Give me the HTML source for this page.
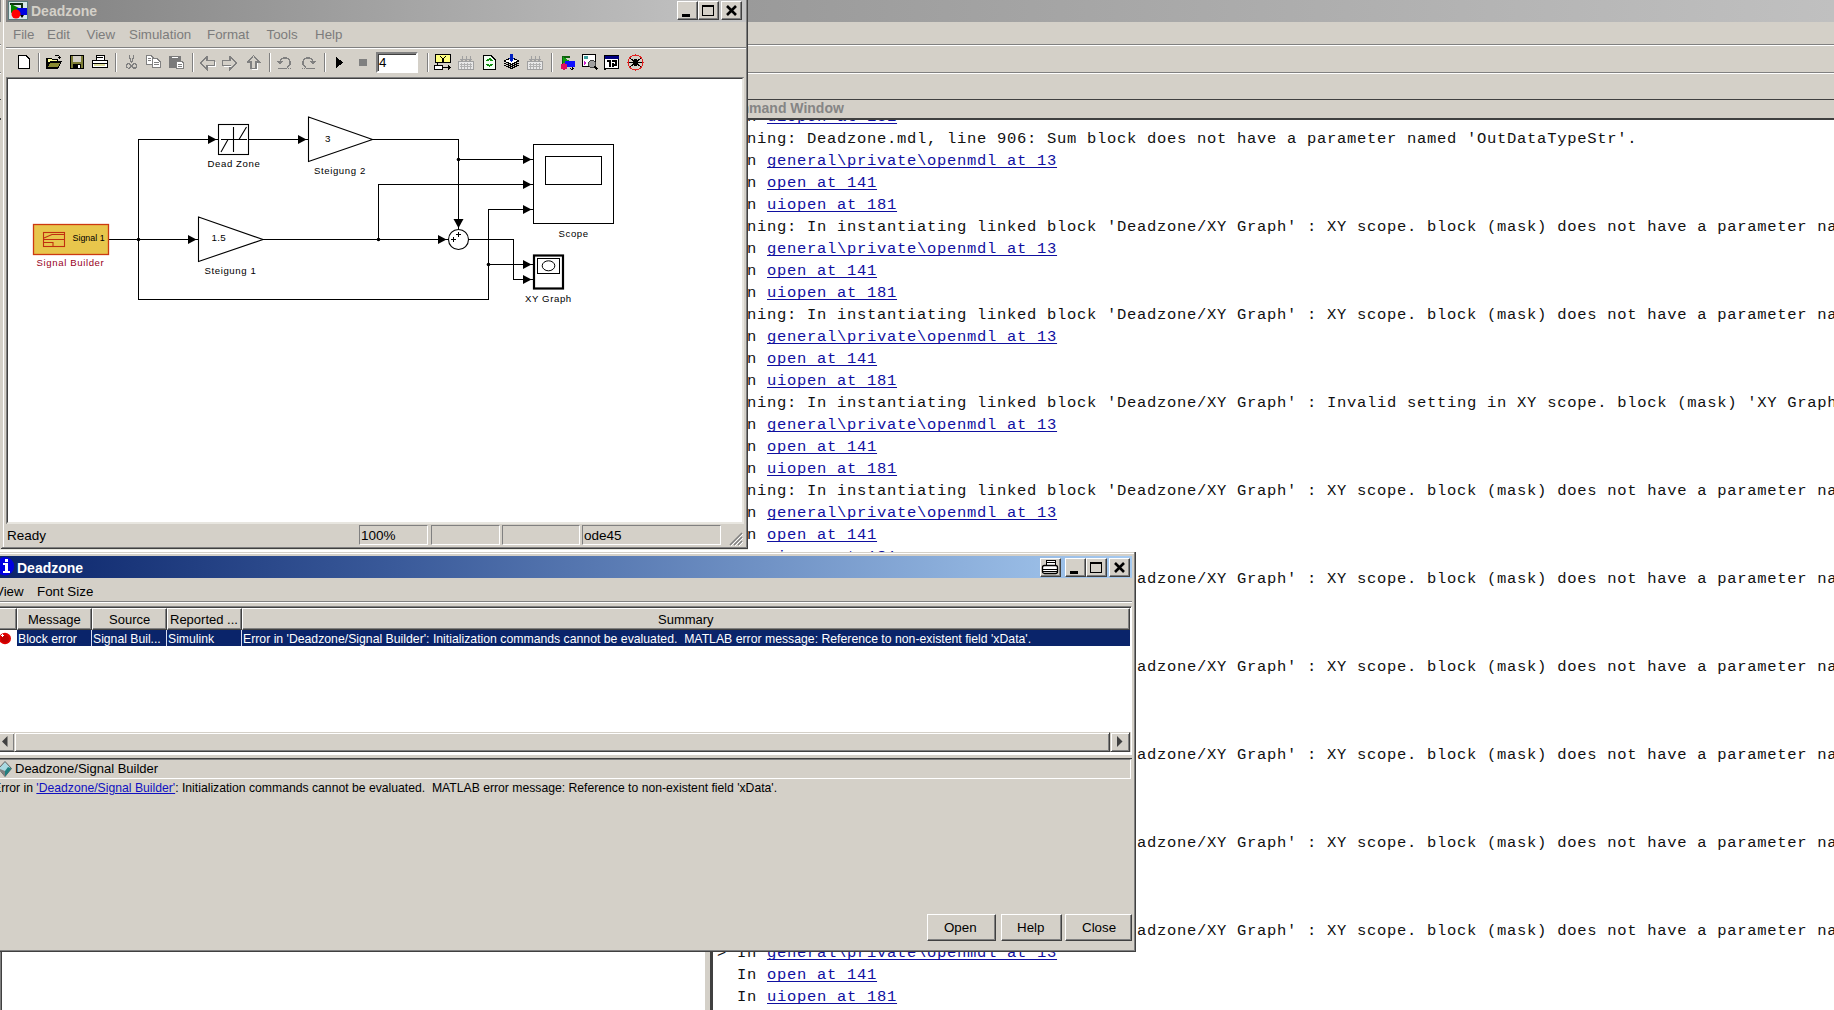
<!DOCTYPE html><html><head><meta charset="utf-8"><style>
*{margin:0;padding:0;box-sizing:border-box}
html,body{width:1834px;height:1010px;overflow:hidden;background:#d4d0c8;position:relative}
body{font-family:"Liberation Sans",sans-serif;font-size:13px;color:#000}
.a{position:absolute}
.mono{font-family:"Liberation Mono",monospace;font-size:15.5px;line-height:22px;white-space:pre;letter-spacing:0.7px;color:#111}
.lk{color:#1010a0;text-decoration:underline;text-underline-offset:2px;text-decoration-skip-ink:none}
.face{background:#d4d0c8}
.t{position:absolute;white-space:pre;line-height:1}
</style></head><body><div class="a" style="left:0;top:0;width:1834px;height:22px;background:linear-gradient(90deg,#808080,#c0c0c0)"></div><div class="a face" style="left:0;top:22px;width:1834px;height:22px"></div><div class="a" style="left:0;top:44px;width:1834px;height:1px;background:#808080"></div><div class="a" style="left:0;top:45px;width:1834px;height:1px;background:#fff"></div><div class="a" style="left:0;top:72px;width:1834px;height:1px;background:#808080"></div><div class="a" style="left:0;top:73px;width:1834px;height:1px;background:#fff"></div><div class="a" style="left:0;top:99px;width:1834px;height:1px;background:#404040"></div><div class="a" style="left:0;top:118px;width:1834px;height:2px;background:#404040"></div><div class="a" style="left:713px;top:120px;width:1121px;height:890px;background:#fff"></div><div class="t" style="left:718px;top:101px;font-size:14px;font-weight:bold;color:#858585">Command Window</div><div class="a" style="left:704px;top:120px;width:6px;height:890px;background:#d4d0c8;border-left:1px solid #fff"></div><div class="a" style="left:710px;top:120px;width:3px;height:890px;background:#404040"></div><div class="a" style="left:0;top:940px;width:704px;height:70px;background:#fff;border-left:2px solid #404040;border-top:2px solid #404040"></div><div class="a" style="left:0;top:940px;width:1px;height:70px;background:#808080"></div><div class="a" style="left:713px;top:120px;width:1121px;height:890px;overflow:hidden"><div class="a mono" style="left:4px;top:-14px">  In <span class="lk">uiopen at 181</span>
Warning: Deadzone.mdl, line 906: Sum block does not have a parameter named &#x27;OutDataTypeStr&#x27;.
&gt; In <span class="lk">general\private\openmdl at 13</span>
  In <span class="lk">open at 141</span>
  In <span class="lk">uiopen at 181</span>
Warning: In instantiating linked block &#x27;Deadzone/XY Graph&#x27; : XY scope. block (mask) does not have a parameter named &#x27;Line&#x27;.
&gt; In <span class="lk">general\private\openmdl at 13</span>
  In <span class="lk">open at 141</span>
  In <span class="lk">uiopen at 181</span>
Warning: In instantiating linked block &#x27;Deadzone/XY Graph&#x27; : XY scope. block (mask) does not have a parameter named &#x27;Line&#x27;.
&gt; In <span class="lk">general\private\openmdl at 13</span>
  In <span class="lk">open at 141</span>
  In <span class="lk">uiopen at 181</span>
Warning: In instantiating linked block &#x27;Deadzone/XY Graph&#x27; : Invalid setting in XY scope. block (mask) &#x27;XY Graph&#x27;
&gt; In <span class="lk">general\private\openmdl at 13</span>
  In <span class="lk">open at 141</span>
  In <span class="lk">uiopen at 181</span>
Warning: In instantiating linked block &#x27;Deadzone/XY Graph&#x27; : XY scope. block (mask) does not have a parameter named &#x27;Line&#x27;.
&gt; In <span class="lk">general\private\openmdl at 13</span>
  In <span class="lk">open at 141</span>
  In <span class="lk">uiopen at 181</span>
Warning: In instantiating linked block &#x27;Deadzone/XY Graph&#x27; : XY scope. block (mask) does not have a parameter named &#x27;Line&#x27;.
&gt; In <span class="lk">general\private\openmdl at 13</span>
  In <span class="lk">open at 141</span>
  In <span class="lk">uiopen at 181</span>
Warning: In instantiating linked block &#x27;Deadzone/XY Graph&#x27; : XY scope. block (mask) does not have a parameter named &#x27;Line&#x27;.
&gt; In <span class="lk">general\private\openmdl at 13</span>
  In <span class="lk">open at 141</span>
  In <span class="lk">uiopen at 181</span>
Warning: In instantiating linked block &#x27;Deadzone/XY Graph&#x27; : XY scope. block (mask) does not have a parameter named &#x27;Line&#x27;.
&gt; In <span class="lk">general\private\openmdl at 13</span>
  In <span class="lk">open at 141</span>
  In <span class="lk">uiopen at 181</span>
Warning: In instantiating linked block &#x27;Deadzone/XY Graph&#x27; : XY scope. block (mask) does not have a parameter named &#x27;Line&#x27;.
&gt; In <span class="lk">general\private\openmdl at 13</span>
  In <span class="lk">open at 141</span>
  In <span class="lk">uiopen at 181</span>
Warning: In instantiating linked block &#x27;Deadzone/XY Graph&#x27; : XY scope. block (mask) does not have a parameter named &#x27;Line&#x27;.
&gt; In <span class="lk">general\private\openmdl at 13</span>
  In <span class="lk">open at 141</span>
  In <span class="lk">uiopen at 181</span></div></div><div class="a face" style="left:1px;top:0;width:747px;height:549px"></div><div class="a" style="left:3px;top:0;width:1px;height:548px;background:#fff"></div><div class="a" style="left:746px;top:0;width:1px;height:548px;background:#808080"></div><div class="a" style="left:747px;top:0;width:1px;height:549px;background:#404040"></div><div class="a" style="left:2px;top:547px;width:745px;height:1px;background:#808080"></div><div class="a" style="left:1px;top:548px;width:747px;height:1px;background:#404040"></div><div class="a" style="left:6px;top:0;width:740px;height:22px;background:linear-gradient(90deg,#808080,#c4c4c4)"></div><svg class="a" style="left:8px;top:1px" width="20" height="19" viewBox="0 0 20 19">
<rect x="0.5" y="0.5" width="19" height="18" fill="#d8e8e8" stroke="#5a7a7a"/>
<rect x="2" y="2" width="13" height="2" fill="#103010"/>
<rect x="13" y="2" width="2" height="13" fill="#103010"/>
<polygon points="3,3 13,8 3,12" fill="#008000"/>
<rect x="9" y="7" width="10" height="7" fill="#0000e0"/>
<circle cx="8" cy="13" r="4.5" fill="#ff0000"/>
<polygon points="12,14 16,14 14,17" fill="#000"/>
</svg><div class="t" style="left:31px;top:4px;font-size:14px;font-weight:bold;color:#d4d0c8">Deadzone</div><div class="a face" style="left:677px;top:1px;width:21px;height:19px;border:1px solid;border-color:#fff #404040 #404040 #fff;box-shadow:inset -1px -1px #808080"></div><svg class="a" style="left:677px;top:1px" width="21" height="19"><rect x="5" y="13" width="8" height="3" fill="#000"/></svg><div class="a face" style="left:698px;top:1px;width:21px;height:19px;border:1px solid;border-color:#fff #404040 #404040 #fff;box-shadow:inset -1px -1px #808080"></div><svg class="a" style="left:698px;top:1px" width="21" height="19"><rect x="4.5" y="4.5" width="11" height="10" fill="none" stroke="#000"/><rect x="4" y="4" width="12" height="2" fill="#000"/></svg><div class="a face" style="left:721px;top:1px;width:21px;height:19px;border:1px solid;border-color:#fff #404040 #404040 #fff;box-shadow:inset -1px -1px #808080"></div><svg class="a" style="left:721px;top:1px" width="21" height="19"><path d="M6 5 L15 14 M15 5 L6 14" stroke="#000" stroke-width="2.6"/></svg><div class="t" style="left:13px;top:28px;font-size:13.33px;color:#7c7c7c">File</div><div class="t" style="left:47px;top:28px;font-size:13.33px;color:#7c7c7c">Edit</div><div class="t" style="left:86.5px;top:28px;font-size:13.33px;color:#7c7c7c">View</div><div class="t" style="left:129px;top:28px;font-size:13.33px;color:#7c7c7c">Simulation</div><div class="t" style="left:207px;top:28px;font-size:13.33px;color:#7c7c7c">Format</div><div class="t" style="left:266.5px;top:28px;font-size:13.33px;color:#7c7c7c">Tools</div><div class="t" style="left:315px;top:28px;font-size:13.33px;color:#7c7c7c">Help</div><div class="a" style="left:6px;top:47px;width:740px;height:1px;background:#808080"></div><div class="a" style="left:6px;top:48px;width:740px;height:1px;background:#fff"></div><div class="a" style="left:6px;top:77px;width:738px;height:447px;background:#fff;border:2px solid;border-color:#404040 #e8e6e0 #e8e6e0 #404040"></div><div class="a" style="left:6px;top:77px;width:737px;height:1px;background:#808080"></div><div class="a" style="left:6px;top:77px;width:1px;height:446px;background:#808080"></div><div class="t" style="left:7px;top:529px;font-size:13.5px">Ready</div><div class="a" style="left:359px;top:525px;width:69px;height:20px;border:1px solid;border-color:#808080 #fff #fff #808080"></div><div class="t" style="left:361px;top:529px;font-size:13.5px">100%</div><div class="a" style="left:431px;top:525px;width:69px;height:20px;border:1px solid;border-color:#808080 #fff #fff #808080"></div><div class="a" style="left:502px;top:525px;width:78px;height:20px;border:1px solid;border-color:#808080 #fff #fff #808080"></div><div class="a" style="left:582px;top:525px;width:139px;height:20px;border:1px solid;border-color:#808080 #fff #fff #808080"></div><div class="t" style="left:584px;top:529px;font-size:13.5px">ode45</div><svg class="a" style="left:728px;top:531px" width="16" height="16"><path d="M14 2 L2 14 M14 6 L6 14 M14 10 L10 14" stroke="#808080" stroke-width="1.5"/><path d="M15 3 L3 15 M15 7 L7 15 M15 11 L11 15" stroke="#fff" stroke-width="1"/></svg><div class="a" style="left:38px;top:53px;width:1px;height:19px;background:#808080"></div><div class="a" style="left:39px;top:53px;width:1px;height:19px;background:#fff"></div><div class="a" style="left:115px;top:53px;width:1px;height:19px;background:#808080"></div><div class="a" style="left:116px;top:53px;width:1px;height:19px;background:#fff"></div><div class="a" style="left:192px;top:53px;width:1px;height:19px;background:#808080"></div><div class="a" style="left:193px;top:53px;width:1px;height:19px;background:#fff"></div><div class="a" style="left:269px;top:53px;width:1px;height:19px;background:#808080"></div><div class="a" style="left:270px;top:53px;width:1px;height:19px;background:#fff"></div><div class="a" style="left:324px;top:53px;width:1px;height:19px;background:#808080"></div><div class="a" style="left:325px;top:53px;width:1px;height:19px;background:#fff"></div><div class="a" style="left:427px;top:53px;width:1px;height:19px;background:#808080"></div><div class="a" style="left:428px;top:53px;width:1px;height:19px;background:#fff"></div><div class="a" style="left:551px;top:53px;width:1px;height:19px;background:#808080"></div><div class="a" style="left:552px;top:53px;width:1px;height:19px;background:#fff"></div><svg class="a" style="left:18px;top:55px" width="12" height="14" viewBox="0 0 12 14" shape-rendering="crispEdges" ><path d="M0.5 0.5 H8 L11.5 4 V13.5 H0.5 Z" fill="#fff" stroke="#000" stroke-width="1.6"/></svg><svg class="a" style="left:46px;top:54px" width="16" height="15" viewBox="0 0 16 15" shape-rendering="crispEdges" ><path d="M1 4 H5 L6 5 H11 V8 H1 Z" fill="#ffff99" stroke="#000"/><path d="M1 14 L4 8 H15 L12 14 Z" fill="#8a8a30" stroke="#000" stroke-width="1.3"/><path d="M1 4 V14" stroke="#000" stroke-width="1.3"/><path d="M9 2 Q11 0 13 2 L14 4" fill="none" stroke="#000"/><path d="M12 3 L15 3 L14 6Z" fill="#000"/></svg><svg class="a" style="left:70px;top:55px" width="14" height="14" viewBox="0 0 14 14" shape-rendering="crispEdges" ><rect x="0.5" y="0.5" width="13" height="13" fill="#7d7d35" stroke="#000" stroke-width="1.3"/><rect x="3" y="1" width="8" height="6" fill="#d4d0c8"/><rect x="3" y="9" width="8" height="4" fill="#000"/><rect x="8" y="10" width="2" height="3" fill="#fff"/></svg><svg class="a" style="left:92px;top:55px" width="16" height="14" viewBox="0 0 16 14" shape-rendering="crispEdges" ><rect x="4.5" y="0.5" width="8" height="5" fill="#fff" stroke="#000"/><path d="M5 2.5 H11" stroke="#000"/><rect x="0.5" y="5.5" width="15" height="7" rx="1.5" fill="#fff" stroke="#000" stroke-width="1.4"/><path d="M1 8.5 H15" stroke="#000" stroke-width="1.3"/><rect x="2" y="9" width="11" height="2" fill="#e0e0a0"/></svg><svg class="a" style="left:126px;top:55px" width="11" height="14" viewBox="0 0 11 14" shape-rendering="crispEdges" ><path d="M3 0 L5.5 8 M8 0 L5.5 8" stroke="#808080" stroke-width="1.2"/><circle cx="2.8" cy="11" r="2.2" fill="none" stroke="#808080" stroke-width="1.2"/><circle cx="8.2" cy="11" r="2.2" fill="none" stroke="#808080" stroke-width="1.2"/></svg><svg class="a" style="left:146px;top:55px" width="15" height="13" viewBox="0 0 15 13" shape-rendering="crispEdges" ><path d="M0.5 0.5 H5 L7 2.5 V9.5 H0.5Z" fill="#fff" stroke="#808080"/><path d="M6.5 3.5 H11 L14.5 7 V12.5 H6.5Z" fill="#fff" stroke="#808080"/><path d="M8 7.5 H13 M8 9.5 H13" stroke="#808080"/><path d="M2 3.5H5 M2 5.5H5" stroke="#808080"/></svg><svg class="a" style="left:169px;top:55px" width="15" height="14" viewBox="0 0 15 14" shape-rendering="crispEdges" ><rect x="0" y="1" width="12" height="12" rx="1.5" fill="#7a7a7a"/><rect x="3" y="2" width="6" height="1" fill="#fff"/><path d="M7.5 6.5 H13 L14.5 8 V13.5 H7.5Z" fill="#fff" stroke="#808080"/><path d="M9 9.5H13 M9 11.5H13" stroke="#808080"/></svg><svg class="a" style="left:200px;top:56px" width="16" height="15" viewBox="0 0 16 15" shape-rendering="crispEdges" ><path d="M7 0.5 L0.5 7 L7 13.5 V9.5 H14.5 V4.5 H7 Z" fill="#d4d0c8" stroke="#808080" stroke-width="1.3"/><path d="M8 10.5 H15.5 V5.5" fill="none" stroke="#fff"/></svg><svg class="a" style="left:222px;top:56px" width="16" height="15" viewBox="0 0 16 15" shape-rendering="crispEdges" ><path d="M8 0.5 L14.5 7 L8 13.5 V9.5 H0.5 V4.5 H8 Z" fill="#d4d0c8" stroke="#808080" stroke-width="1.3"/><path d="M1.5 10.5 H8.5" fill="none" stroke="#fff"/></svg><svg class="a" style="left:247px;top:55px" width="14" height="15" viewBox="0 0 14 15" shape-rendering="crispEdges" ><path d="M0.5 7 L6.5 0.5 L12.5 7 H9 V13.5 H4 V7 Z" fill="#d4d0c8" stroke="#808080" stroke-width="1.3"/><path d="M5 14.5 H10 V8" fill="none" stroke="#fff"/></svg><svg class="a" style="left:277px;top:56px" width="16" height="14" viewBox="0 0 16 14" shape-rendering="crispEdges" ><path d="M3 7 Q3 2 8 2 Q13 2 13 7 Q13 10 10 11" fill="none" stroke="#808080" stroke-width="1.5"/><path d="M0 5 L3 9 L6 5Z" fill="#808080"/><path d="M1 12.5 H10 M11 12.5 H12 M13 12.5H14" stroke="#808080" stroke-width="1.5"/></svg><svg class="a" style="left:300px;top:56px" width="16" height="14" viewBox="0 0 16 14" shape-rendering="crispEdges" ><g transform="translate(16,0) scale(-1,1)"><path d="M3 7 Q3 2 8 2 Q13 2 13 7 Q13 10 10 11" fill="none" stroke="#808080" stroke-width="1.5"/><path d="M0 5 L3 9 L6 5Z" fill="#808080"/><path d="M1 12.5 H10 M11 12.5 H12 M13 12.5H14" stroke="#808080" stroke-width="1.5"/></g></svg><svg class="a" style="left:336px;top:57px" width="8" height="11" viewBox="0 0 8 11" shape-rendering="crispEdges" ><path d="M0 0 L7.5 5.5 L0 11Z" fill="#000"/></svg><svg class="a" style="left:359px;top:59px" width="8" height="8" viewBox="0 0 8 8" shape-rendering="crispEdges" ><rect x="0" y="0" width="8" height="7" fill="#808080"/></svg><div class="a" style="left:376px;top:52px;width:42px;height:21px;background:#fff;border:2px solid;border-color:#808080 #fff #fff #808080;box-shadow:inset 1px 1px #404040"></div><div class="t" style="left:379px;top:56px;font-size:13.33px">4</div><svg class="a" style="left:434px;top:54px" width="18" height="17" viewBox="0 0 18 17" shape-rendering="crispEdges" ><rect x="1.5" y="0.5" width="15" height="8" fill="#ffff80" stroke="#000"/><path d="M6 2 L9 5 L12 2 M9 5 V8" stroke="#000" stroke-width="1.4" fill="none"/><rect x="0.5" y="11.5" width="8" height="4" fill="#fff" stroke="#000" stroke-width="1.2"/><path d="M9 13.5 H16" stroke="#000" stroke-width="1.3"/><path d="M14 11 L17.5 13.5 L14 16Z" fill="#000"/><path d="M3 9 V11" stroke="#000"/></svg><svg class="a" style="left:458px;top:55px" width="16" height="15" viewBox="0 0 16 15" shape-rendering="crispEdges" ><rect x="0.5" y="6.5" width="15" height="8" fill="#e8e8e8" stroke="#a0a0a0"/><path d="M2 9.5H14 M2 11.5H14 M3 8 V14 M6 8V14 M9 8V14 M12 8V14" stroke="#b0b0b0"/><path d="M4 1V6 M8 1V6 M12 1V6" stroke="#a0a0a0"/><path d="M2.5 4 L4 6 L5.5 4 M6.5 4 L8 6 L9.5 4 M10.5 4 L12 6 L13.5 4" stroke="#a0a0a0" fill="none"/></svg><svg class="a" style="left:483px;top:55px" width="13" height="15" viewBox="0 0 13 15" shape-rendering="crispEdges" ><path d="M0.5 0.5 H8 L12.5 5 V14.5 H0.5Z" fill="#f4fff4" stroke="#000" stroke-width="1.3"/><path d="M4 6 Q6 3 9 5 M9 9 Q7 12 4 10" stroke="#109010" stroke-width="1.6" fill="none"/><path d="M8 3 L10 6 L7 6Z M5 12 L3 9 L6 9Z" fill="#109010"/></svg><svg class="a" style="left:503px;top:54px" width="17" height="16" viewBox="0 0 17 16" shape-rendering="crispEdges" style="shape-rendering:auto"><path d="M1 11 L8.5 14.5 L16 11" fill="none" stroke="#000" stroke-width="1.2"/><path d="M1 9 L8.5 12.5 L16 9" fill="none" stroke="#000" stroke-width="1.2"/><path d="M1 7 L8.5 3.5 L16 7 L8.5 10.5 Z" fill="#fff" stroke="#000" stroke-width="1.2"/><path d="M8.5 0 V5" stroke="#0020c0" stroke-width="2.2"/><path d="M5.5 4 L8.5 8 L11.5 4Z" fill="#0020c0"/></svg><svg class="a" style="left:527px;top:55px" width="16" height="15" viewBox="0 0 16 15" shape-rendering="crispEdges" ><rect x="0.5" y="6.5" width="15" height="8" fill="#e8e8e8" stroke="#a0a0a0"/><path d="M2 9.5H14 M2 11.5H14 M3 8 V14 M6 8V14 M9 8V14 M12 8V14" stroke="#b0b0b0"/><path d="M4 1V6 M8 1V6 M12 1V6" stroke="#a0a0a0"/><path d="M2.5 4 L4 6 L5.5 4 M6.5 4 L8 6 L9.5 4 M10.5 4 L12 6 L13.5 4" stroke="#a0a0a0" fill="none"/></svg><svg class="a" style="left:560px;top:54px" width="15" height="16" viewBox="0 0 15 16" shape-rendering="crispEdges" ><rect x="2" y="2" width="1.5" height="10" fill="#106010"/><rect x="2" y="2" width="8" height="1.5" fill="#106010"/><polygon points="3,3 10,7 3,10" fill="#10a010"/><rect x="5" y="7" width="10" height="6" fill="#1010ff"/><circle cx="4" cy="12.5" r="3.2" fill="#e01060"/><path d="M12 13 V16 M10.5 14.5 L12 16 L13.5 14.5" stroke="#000"/></svg><svg class="a" style="left:582px;top:54px" width="16" height="16" viewBox="0 0 16 16" shape-rendering="crispEdges" ><rect x="0.5" y="0.5" width="13" height="12" fill="#fff" stroke="#000" stroke-width="1.3"/><rect x="2" y="2" width="4" height="3" fill="#40a0a0"/><polygon points="2,7 5,9 2,11" fill="#d020d0"/><circle cx="10" cy="10" r="3.5" fill="#a0a0a0" stroke="#404040"/><path d="M12.5 12.5 L15.5 15.5" stroke="#000" stroke-width="1.6"/></svg><svg class="a" style="left:604px;top:55px" width="16" height="15" viewBox="0 0 16 15" shape-rendering="crispEdges" ><rect x="0.5" y="0.5" width="14" height="13" fill="#fff" stroke="#000" stroke-width="1.2"/><rect x="0.5" y="0.5" width="14" height="3" fill="#000080"/><path d="M3 6 H6 V12 M8 6 H12 V10 H9 M9 8 V12" stroke="#000" fill="none" stroke-width="1.2"/><path d="M0 14.5 H2" stroke="#000"/></svg><svg class="a" style="left:627px;top:54px" width="17" height="17" viewBox="0 0 17 17" shape-rendering="crispEdges" shape-rendering="auto"><circle cx="8.5" cy="8.5" r="7.5" fill="none" stroke="#e02020" stroke-width="1.3"/><ellipse cx="8.5" cy="8.5" rx="2.5" ry="3.5" fill="#000"/><path d="M3 4 L14 13 M3 13 L14 4 M2 8.5 H15" stroke="#000" stroke-width="1"/></svg><svg class="a" style="left:0;top:0" width="747" height="548" viewBox="0 0 747 548"><path d="M109 239.5 H198" stroke="#000" stroke-width="1"/><path d="M188 235.0 L196.5 239.5 L188 244.0Z" fill="#000"/><path d="M138.5 139 V300" stroke="#000" stroke-width="1"/><path d="M138 139.5 H218" stroke="#000" stroke-width="1"/><path d="M208 135.0 L216.5 139.5 L208 144.0Z" fill="#000"/><path d="M249 139.5 H308" stroke="#000" stroke-width="1"/><path d="M298 135.0 L306.5 139.5 L298 144.0Z" fill="#000"/><path d="M372 139.5 H459" stroke="#000" stroke-width="1"/><path d="M458.5 139 V229" stroke="#000" stroke-width="1"/><path d="M453.5 219 L458.5 228 L463.5 219Z" fill="#000"/><circle cx="458.5" cy="159.5" r="1.8" fill="#000"/><path d="M458 159.5 H533" stroke="#000" stroke-width="1"/><path d="M523 155.0 L531.5 159.5 L523 164.0Z" fill="#000"/><path d="M263 239.5 H448" stroke="#000" stroke-width="1"/><path d="M438 235.0 L446.5 239.5 L438 244.0Z" fill="#000"/><circle cx="378.5" cy="239.5" r="1.8" fill="#000"/><path d="M378.5 184 V240" stroke="#000" stroke-width="1"/><path d="M378 184.5 H533" stroke="#000" stroke-width="1"/><path d="M523 180.0 L531.5 184.5 L523 189.0Z" fill="#000"/><path d="M138 299.5 H489" stroke="#000" stroke-width="1"/><path d="M488.5 209 V300" stroke="#000" stroke-width="1"/><path d="M488 209.5 H533" stroke="#000" stroke-width="1"/><path d="M523 205.0 L531.5 209.5 L523 214.0Z" fill="#000"/><circle cx="488.5" cy="264.5" r="1.8" fill="#000"/><path d="M488 264.5 H533" stroke="#000" stroke-width="1"/><path d="M523 260.0 L531.5 264.5 L523 269.0Z" fill="#000"/><path d="M468 239.5 H514" stroke="#000" stroke-width="1"/><path d="M513.5 239 V280" stroke="#000" stroke-width="1"/><path d="M513 279.5 H533" stroke="#000" stroke-width="1"/><path d="M523 275.0 L531.5 279.5 L523 284.0Z" fill="#000"/><circle cx="138.5" cy="239.5" r="1.8" fill="#000"/><rect x="33.5" y="224.5" width="75" height="30" fill="#e8c64c" stroke="#cc3a10" stroke-width="1.3"/><g fill="none" stroke="#c03010" stroke-width="1.1"><rect x="43.5" y="232.5" width="21" height="14"/><path d="M43.5 239.5 H64.5 M44 238 L52 234.5 H64 M44 242.5 H53 V246"/></g><rect x="218.5" y="124.5" width="30" height="30" fill="#fff" stroke="#000" stroke-width="1.1"/><path d="M221 139.5 H247 M233.5 127 V152 M221 152 L228 139.5 M239 139.5 L246.5 127" stroke="#000" stroke-width="1.1"/><path d="M308.5 117 L372.5 139.5 L308.5 161.5Z" fill="#fff" stroke="#000" stroke-width="1.1"/><path d="M198.5 217 L263 239.5 L198.5 261.5Z" fill="#fff" stroke="#000" stroke-width="1.1"/><circle cx="458.5" cy="239.5" r="10" fill="#fff" stroke="#000" stroke-width="1.1"/><path d="M456 234.5 H461 M458.5 232 V237 M451 239.5 H456 M453.5 237 V242" stroke="#000" stroke-width="1"/><rect x="533.5" y="144.5" width="80" height="79" fill="#fff" stroke="#000" stroke-width="1"/><rect x="545.5" y="156.5" width="56" height="28" fill="#fff" stroke="#000" stroke-width="1"/><rect x="534" y="255.5" width="29" height="33" fill="#fff" stroke="#000" stroke-width="2.2"/><rect x="537.5" y="258.5" width="22" height="15" fill="none" stroke="#000" stroke-width="1"/><ellipse cx="548.5" cy="265.8" rx="6.3" ry="5" fill="none" stroke="#000" stroke-width="1"/></svg><div class="t" style="left:72.5px;top:234px;font-size:8.9px;letter-spacing:0px;color:#000">Signal 1</div><div class="t" style="left:36.5px;top:257.5px;font-size:9.6px;letter-spacing:0.62px;color:#98001c">Signal Builder</div><div class="t" style="left:207.5px;top:158.5px;font-size:9.6px;letter-spacing:0.6px;color:#000">Dead Zone</div><div class="t" style="left:325px;top:133.5px;font-size:9.8px;letter-spacing:0px;color:#000">3</div><div class="t" style="left:314px;top:165.5px;font-size:9.6px;letter-spacing:0.6px;color:#000">Steigung 2</div><div class="t" style="left:211.5px;top:233px;font-size:9.8px;letter-spacing:0.3px;color:#000">1.5</div><div class="t" style="left:204.5px;top:265.5px;font-size:9.6px;letter-spacing:0.6px;color:#000">Steigung 1</div><div class="t" style="left:558.5px;top:228.5px;font-size:9.6px;letter-spacing:0.6px;color:#000">Scope</div><div class="t" style="left:525px;top:293.5px;font-size:9.6px;letter-spacing:0.6px;color:#000">XY Graph</div><div class="a" style="left:0;top:549px;width:748px;height:3px;background:#fff;border-top:1px solid #e8e8e0"></div><div class="a face" style="left:0;top:552px;width:1136px;height:400px"></div><div class="a" style="left:0;top:553px;width:1134px;height:1px;background:#fff"></div><div class="a" style="left:1134px;top:552px;width:1px;height:399px;background:#808080"></div><div class="a" style="left:1135px;top:552px;width:1px;height:400px;background:#404040"></div><div class="a" style="left:0;top:950px;width:1135px;height:1px;background:#808080"></div><div class="a" style="left:0;top:951px;width:1136px;height:1px;background:#404040"></div><div class="a" style="left:0;top:556px;width:1132px;height:22px;background:linear-gradient(90deg,#0a246a 0%,#3a5a9a 35%,#a6caf0 100%)"></div><svg class="a" style="left:-2px;top:556px" width="18" height="22" viewBox="-2 556 18 22" shape-rendering="crispEdges"><circle cx="5" cy="566.3" r="9.2" fill="#0000e0" shape-rendering="auto"/><rect x="5" y="559" width="3" height="3" fill="#fff"/><rect x="3" y="563" width="5" height="2" fill="#fff"/><rect x="5" y="563" width="3" height="10" fill="#fff"/><rect x="3" y="571" width="7" height="2" fill="#fff"/></svg><div class="t" style="left:17px;top:561px;font-size:14px;font-weight:bold;color:#fff">Deadzone</div><div class="a face" style="left:1040px;top:558px;width:21px;height:19px;border:1px solid;border-color:#fff #404040 #404040 #fff;box-shadow:inset -1px -1px #808080"></div><svg class="a" style="left:1040px;top:558px" width="21" height="19"><rect x="6.5" y="2.5" width="9" height="5" fill="#fff" stroke="#000"/><path d="M7 4.5H15" stroke="#000"/><rect x="2.5" y="7.5" width="15" height="8" rx="2" fill="#fff" stroke="#000" stroke-width="1.3"/><path d="M3 11.5H17 M3 13.5 H17" stroke="#000"/></svg><div class="a face" style="left:1065px;top:558px;width:21px;height:19px;border:1px solid;border-color:#fff #404040 #404040 #fff;box-shadow:inset -1px -1px #808080"></div><svg class="a" style="left:1065px;top:558px" width="21" height="19"><rect x="5" y="13" width="8" height="3" fill="#000"/></svg><div class="a face" style="left:1086px;top:558px;width:21px;height:19px;border:1px solid;border-color:#fff #404040 #404040 #fff;box-shadow:inset -1px -1px #808080"></div><svg class="a" style="left:1086px;top:558px" width="21" height="19"><rect x="4.5" y="4.5" width="11" height="10" fill="none" stroke="#000"/><rect x="4" y="4" width="12" height="2" fill="#000"/></svg><div class="a face" style="left:1109px;top:558px;width:21px;height:19px;border:1px solid;border-color:#fff #404040 #404040 #fff;box-shadow:inset -1px -1px #808080"></div><svg class="a" style="left:1109px;top:558px" width="21" height="19"><path d="M6 5 L15 14 M15 5 L6 14" stroke="#000" stroke-width="2.6"/></svg><div class="t" style="left:-5px;top:585px;font-size:13.33px">View</div><div class="t" style="left:37px;top:585px;font-size:13.33px">Font Size</div><div class="a" style="left:0;top:601px;width:1132px;height:1px;background:#808080"></div><div class="a" style="left:0;top:602px;width:1132px;height:1px;background:#fff"></div><div class="a" style="left:0;top:606px;width:1132px;height:146px;background:#fff;border-top:1px solid #808080;border-right:1px solid #fff"></div><div class="a" style="left:0;top:607px;width:1131px;height:1px;background:#404040"></div><div class="a face" style="left:-2px;top:608px;width:19px;height:22px;border:1px solid;border-color:#fff #404040 #404040 #fff;box-shadow:inset -1px -1px #808080"></div><div class="a face" style="left:17px;top:608px;width:75px;height:22px;border:1px solid;border-color:#fff #404040 #404040 #fff;box-shadow:inset -1px -1px #808080"></div><div class="a face" style="left:92px;top:608px;width:75px;height:22px;border:1px solid;border-color:#fff #404040 #404040 #fff;box-shadow:inset -1px -1px #808080"></div><div class="a face" style="left:167px;top:608px;width:75px;height:22px;border:1px solid;border-color:#fff #404040 #404040 #fff;box-shadow:inset -1px -1px #808080"></div><div class="a face" style="left:242px;top:608px;width:888px;height:22px;border:1px solid;border-color:#fff #404040 #404040 #fff;box-shadow:inset -1px -1px #808080"></div><div class="t" style="left:28px;top:613px;font-size:13px">Message</div><div class="t" style="left:109px;top:613px;font-size:13px">Source</div><div class="t" style="left:170px;top:613px;font-size:13px">Reported ...</div><div class="t" style="left:658px;top:613px;font-size:13px">Summary</div><div class="a" style="left:17px;top:630px;width:1113px;height:16px;background:#0a246a"></div><div class="a" style="left:91px;top:630px;width:1px;height:16px;background:#d8dcf0"></div><div class="a" style="left:166px;top:630px;width:1px;height:16px;background:#d8dcf0"></div><div class="a" style="left:241px;top:630px;width:1px;height:16px;background:#d8dcf0"></div><div class="t" style="left:18px;top:633px;font-size:12.2px;color:#fff">Block error</div><div class="t" style="left:93px;top:633px;font-size:12.2px;color:#fff">Signal Buil...</div><div class="t" style="left:168px;top:633px;font-size:12.2px;color:#fff">Simulink</div><div class="t" style="left:243px;top:633px;font-size:12.25px;color:#fff">Error in 'Deadzone/Signal Builder': Initialization commands cannot be evaluated.  MATLAB error message: Reference to non-existent field 'xData'.</div><svg class="a" style="left:-2px;top:632px" width="14" height="13"><ellipse cx="7" cy="6.5" rx="6" ry="5.7" fill="#e00000"/><ellipse cx="7" cy="7" rx="4" ry="3.5" fill="#c00000"/><path d="M3 3.5H6 M4.5 2V5" stroke="#fff" stroke-width="1"/></svg><div class="a" style="left:0;top:732px;width:1131px;height:20px;background:#d4d0c8"></div><div class="a face" style="left:-6px;top:732px;width:21px;height:20px;border:1px solid;border-color:#d4d0c8 #404040 #404040 #d4d0c8;box-shadow:inset 1px 1px #fff,inset -1px -1px #808080"></div><div class="a face" style="left:14px;top:732px;width:1096px;height:20px;border:1px solid;border-color:#d4d0c8 #404040 #404040 #d4d0c8;box-shadow:inset 1px 1px #fff,inset -1px -1px #808080"></div><div class="a face" style="left:1110px;top:732px;width:20px;height:20px;border:1px solid;border-color:#d4d0c8 #404040 #404040 #d4d0c8;box-shadow:inset 1px 1px #fff,inset -1px -1px #808080"></div><svg class="a" style="left:2px;top:736px" width="6" height="11"><path d="M5.5 0 L0 5.5 L5.5 11Z" fill="#404040"/></svg><svg class="a" style="left:1117px;top:736px" width="6" height="11"><path d="M0 0 L5.5 5.5 L0 11Z" fill="#404040"/></svg><div class="a" style="left:0;top:752px;width:1132px;height:3px;background:#fff"></div><div class="a" style="left:0;top:758px;width:1132px;height:1px;background:#404040"></div><div class="a" style="left:-2px;top:759px;width:1133px;height:20px;border:1px solid;border-color:#808080 #fff #fff #808080"></div><svg class="a" style="left:-2px;top:761px" width="14" height="16"><path d="M7 0.5 L13.5 7.5 L7 15.5 L0.5 7.5Z" fill="#a8d8e0" stroke="#606060"/><path d="M7 15.5 L13.5 7.5 L10 6 L7 10Z" fill="#208080"/><path d="M0.5 7.5 L7 15.5 V10 Z" fill="#808080"/></svg><div class="t" style="left:15px;top:762px;font-size:13px">Deadzone/Signal Builder</div><div class="t" style="left:-7px;top:782px;font-size:12.2px">Error in <span style="color:#1010c0;text-decoration:underline">'Deadzone/Signal Builder'</span>: Initialization commands cannot be evaluated.  MATLAB error message: Reference to non-existent field 'xData'.</div><div class="a face" style="left:927px;top:914px;width:69px;height:27px;border:1px solid;border-color:#fff #404040 #404040 #fff;box-shadow:inset -1px -1px #808080"></div><div class="t" style="left:944px;top:921px;font-size:13.33px">Open</div><div class="a face" style="left:1001px;top:914px;width:61px;height:27px;border:1px solid;border-color:#fff #404040 #404040 #fff;box-shadow:inset -1px -1px #808080"></div><div class="t" style="left:1017px;top:921px;font-size:13.33px">Help</div><div class="a face" style="left:1065px;top:914px;width:67px;height:27px;border:1px solid;border-color:#fff #404040 #404040 #fff;box-shadow:inset -1px -1px #808080"></div><div class="t" style="left:1082px;top:921px;font-size:13.33px">Close</div></body></html>
